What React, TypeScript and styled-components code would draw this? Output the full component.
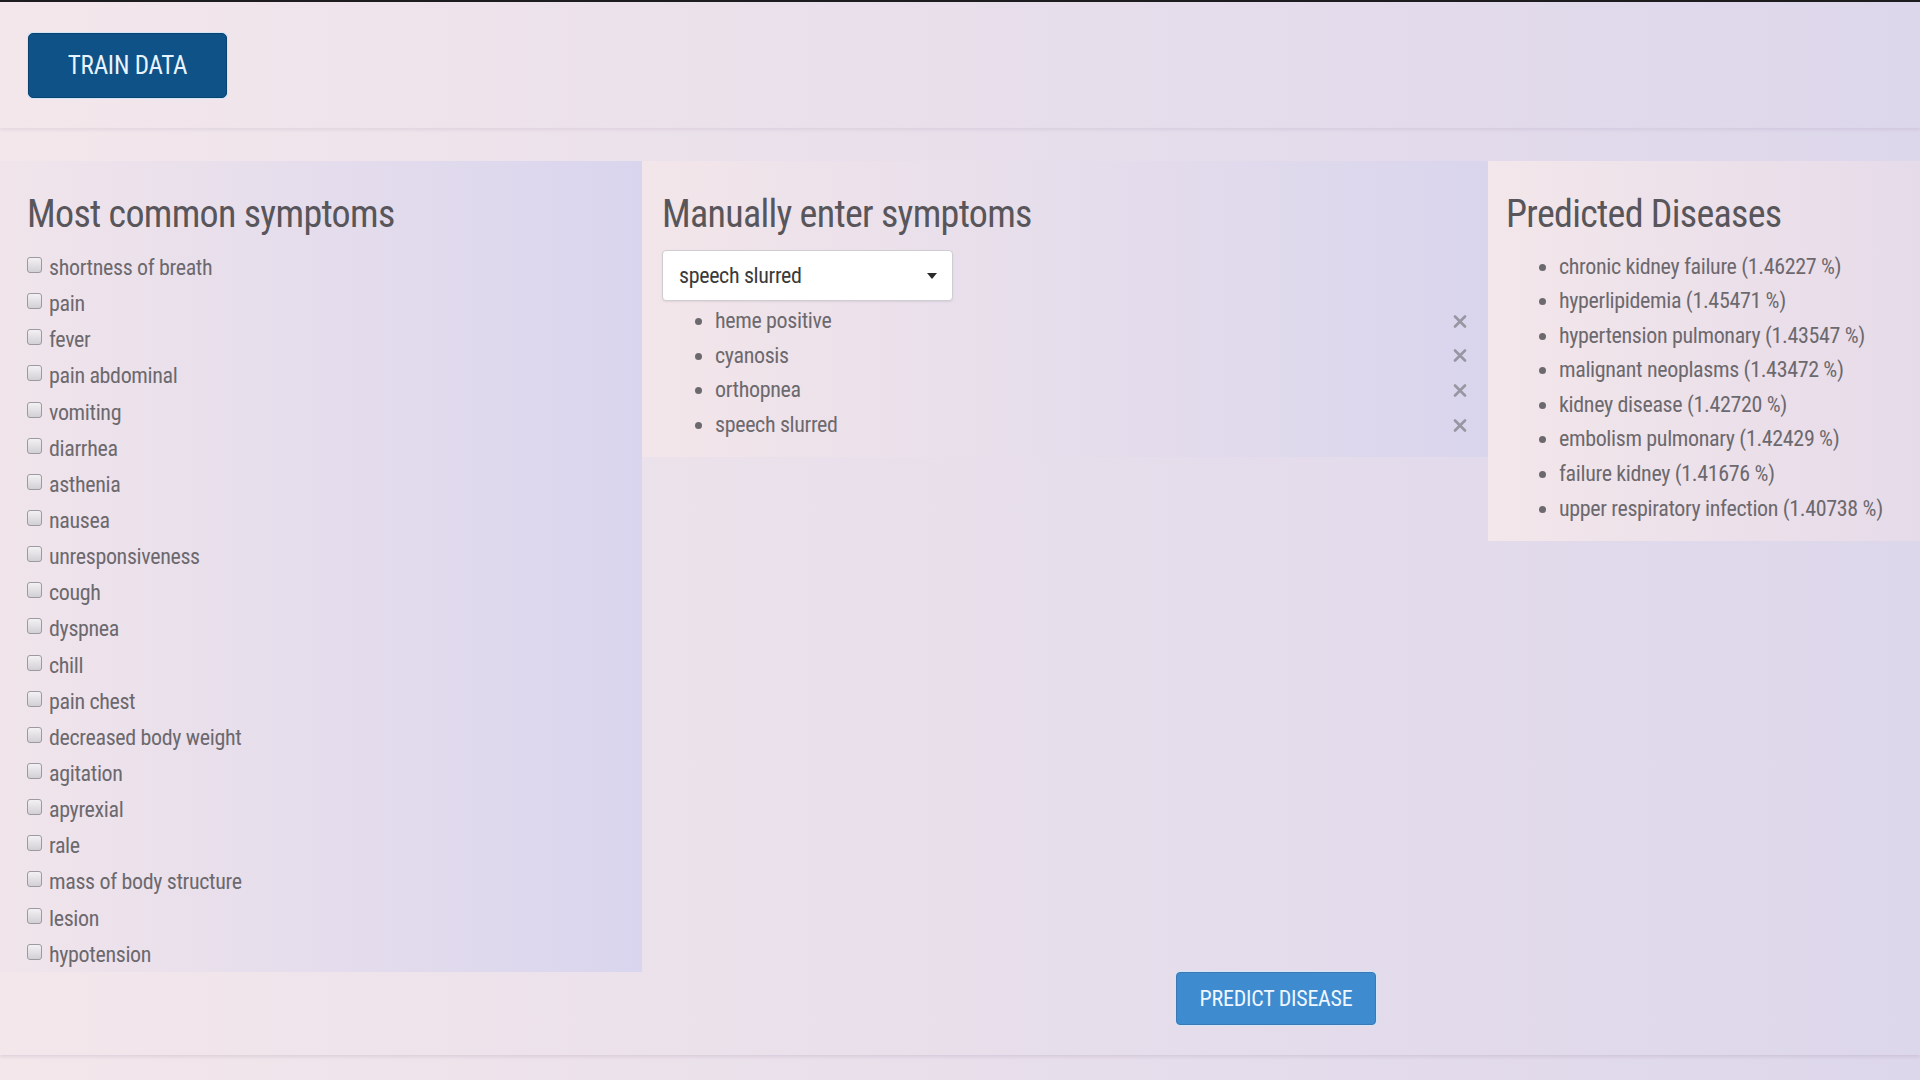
import React from 'react';
import styled, { createGlobalStyle } from 'styled-components';

const STRETCH = '79%';
const BUTTON_STRETCH = '83%';

const GlobalStyle = createGlobalStyle`
  html, body {
    margin: 0;
    padding: 0;
  }
  body {
    font-family: Roboto, "Liberation Sans", sans-serif;
    font-stretch: ${STRETCH};
    background: linear-gradient(to right, #f3e7eb, #ddd7eb);
    overflow: hidden;
  }
`;

const Page = styled.div`
  height: 1080px;
  box-sizing: border-box;
  border-top: 2px solid #1d1d1f;
  display: flex;
  flex-direction: column;
`;

const Header = styled.header`
  height: 126px;
  box-sizing: border-box;
  padding: 31px 28px 0;
  box-shadow: 0 2px 3px rgba(110, 90, 120, 0.1);
  position: relative;
  z-index: 2;
`;

const TrainButton = styled.button`
  width: 199px;
  height: 65px;
  background: #0e5288;
  color: #eaf4ff;
  border: 1px solid #0a436f;
  border-radius: 5px;
  box-shadow: 0 0 0 1px rgba(205, 228, 250, 0.9);
  font-family: Roboto, "Liberation Sans", sans-serif;
  font-stretch: ${BUTTON_STRETCH};
  font-size: 25px;
  letter-spacing: -0.2px;
  text-transform: uppercase;
  cursor: pointer;
`;

const Main = styled.main`
  height: 927px;
  box-sizing: border-box;
  padding-top: 33px;
  display: grid;
  grid-template-columns: 642px 846px 1fr;
  grid-template-rows: auto 1fr;
  align-items: start;
  box-shadow: 0 2px 3px rgba(110, 90, 120, 0.14);
  position: relative;
  z-index: 1;
`;

const Panel = styled.section<{ $from: string; $to: string; $pad: string }>`
  background: linear-gradient(to right, ${p => p.$from}, ${p => p.$to});
  padding: ${p => p.$pad};
  box-sizing: border-box;
`;

const Heading = styled.h2`
  margin: 33px 0 15.5px;
  font-size: 38px;
  line-height: 40px;
  font-weight: 400;
  letter-spacing: -0.7px;
  color: #58565a;
`;

const CheckList = styled.div`
  display: flex;
  flex-direction: column;
`;

const CheckRow = styled.label`
  display: flex;
  align-items: center;
  gap: 7px;
  height: 36.15px;
  font-size: 22px;
  letter-spacing: -0.35px;
  color: #6c696e;
  cursor: pointer;
`;

const Box = styled.input`
  appearance: none;
  margin: -5px 0 0 0;
  width: 15px;
  height: 16px;
  border: 1px solid #9c99a0;
  border-radius: 3px;
  background: linear-gradient(#f3f1f3, #d2d0d5);
  box-sizing: border-box;
  flex-shrink: 0;
`;

const SelectWrap = styled.div`
  position: relative;
  width: 291px;
  height: 51px;
  margin-bottom: 3.5px;
`;

const Select = styled.select`
  appearance: none;
  display: block;
  box-sizing: border-box;
  width: 291px;
  height: 51px;
  margin: 0;
  padding: 0 16px;
  border: 1px solid #cfcdd1;
  border-radius: 4px;
  background: #fff;
  box-shadow: 0 1px 2px rgba(0, 0, 0, 0.08);
  font-family: Roboto, "Liberation Sans", sans-serif;
  font-stretch: ${STRETCH};
  font-size: 22px;
  letter-spacing: -0.35px;
  color: #3a3a3a;
`;

const Caret = styled.svg`
  position: absolute;
  right: 16px;
  top: 23px;
  pointer-events: none;
`;

const Bullets = styled.ul`
  margin: 0;
  padding: 0 0 0 53px;
  list-style: disc;
  color: #6c696e;
`;

const Item = styled.li`
  font-size: 22px;
  line-height: 34.6px;
  letter-spacing: -0.35px;
  color: #6c696e;
`;

const RowInner = styled.div`
  display: flex;
  align-items: center;
  justify-content: space-between;
`;

const Remove = styled.button`
  border: 0;
  background: none;
  padding: 0;
  display: flex;
  cursor: pointer;
`;

const ButtonRow = styled.div`
  grid-column: 2 / 4;
  justify-self: center;
  margin: 0 10px 0 0;
`;

const PredictButton = styled.button`
  width: 200px;
  height: 53px;
  background: #3f8bd0;
  color: #eef7ff;
  border: 1px solid #3a79b5;
  border-radius: 4px;
  box-shadow: 0 0 0 1px rgba(210, 230, 250, 0.9);
  font-family: Roboto, "Liberation Sans", sans-serif;
  font-stretch: ${BUTTON_STRETCH};
  font-size: 22px;
  letter-spacing: -0.25px;
  text-transform: uppercase;
  cursor: pointer;
`;

const common = [
  'shortness of breath', 'pain', 'fever', 'pain abdominal', 'vomiting', 'diarrhea',
  'asthenia', 'nausea', 'unresponsiveness', 'cough', 'dyspnea', 'chill', 'pain chest',
  'decreased body weight', 'agitation', 'apyrexial', 'rale', 'mass of body structure',
  'lesion', 'hypotension',
];

const entered = ['heme positive', 'cyanosis', 'orthopnea', 'speech slurred'];

const predicted: [string, string][] = [
  ['chronic kidney failure', '1.46227'],
  ['hyperlipidemia', '1.45471'],
  ['hypertension pulmonary', '1.43547'],
  ['malignant neoplasms', '1.43472'],
  ['kidney disease', '1.42720'],
  ['embolism pulmonary', '1.42429'],
  ['failure kidney', '1.41676'],
  ['upper respiratory infection', '1.40738'],
];

const XIcon = () => (
  <svg width="14" height="13" viewBox="0 0 14 13">
    <path d="M2 1.5 L12 11.5 M12 1.5 L2 11.5" stroke="#9896a2" strokeWidth="2.6" strokeLinecap="round" />
  </svg>
);

const App: React.FC = () => {
  return (
    <Page>
      <GlobalStyle />
      <Header>
        <TrainButton>Train data</TrainButton>
      </Header>
      <Main>
        <Panel $from="#f1e5eb" $to="#d9d5ee" $pad="0 0 0 27px">
          <Heading>Most common symptoms</Heading>
          <CheckList>
            {common.map(s => (
              <CheckRow key={s}>
                <Box type="checkbox" />
                {s}
              </CheckRow>
            ))}
          </CheckList>
        </Panel>

        <Panel $from="#f3e6ea" $to="#d9d5ed" $pad="0 21px 14.5px 20px">
          <Heading>Manually enter symptoms</Heading>
          <SelectWrap>
            <Select defaultValue="speech slurred">
              <option>speech slurred</option>
              <option>heme positive</option>
              <option>cyanosis</option>
              <option>orthopnea</option>
            </Select>
            <Caret width="10" height="6" viewBox="0 0 10 6">
              <path d="M0 0 H10 L5 6 Z" fill="#2a2a2a" />
            </Caret>
          </SelectWrap>
          <Bullets>
            {entered.map(s => (
              <Item key={s}>
                <RowInner>
                  {s}
                  <Remove aria-label="remove">
                    <XIcon />
                  </Remove>
                </RowInner>
              </Item>
            ))}
          </Bullets>
        </Panel>

        <Panel $from="#f3e7eb" $to="#e6dbe9" $pad="0 0 15px 18px">
          <Heading>Predicted Diseases</Heading>
          <Bullets>
            {predicted.map(([name, pct]) => (
              <Item key={name}>
                {name} ({pct} %)
              </Item>
            ))}
          </Bullets>
        </Panel>

        <ButtonRow>
          <PredictButton>Predict disease</PredictButton>
        </ButtonRow>
      </Main>
    </Page>
  );
};

export default App;
